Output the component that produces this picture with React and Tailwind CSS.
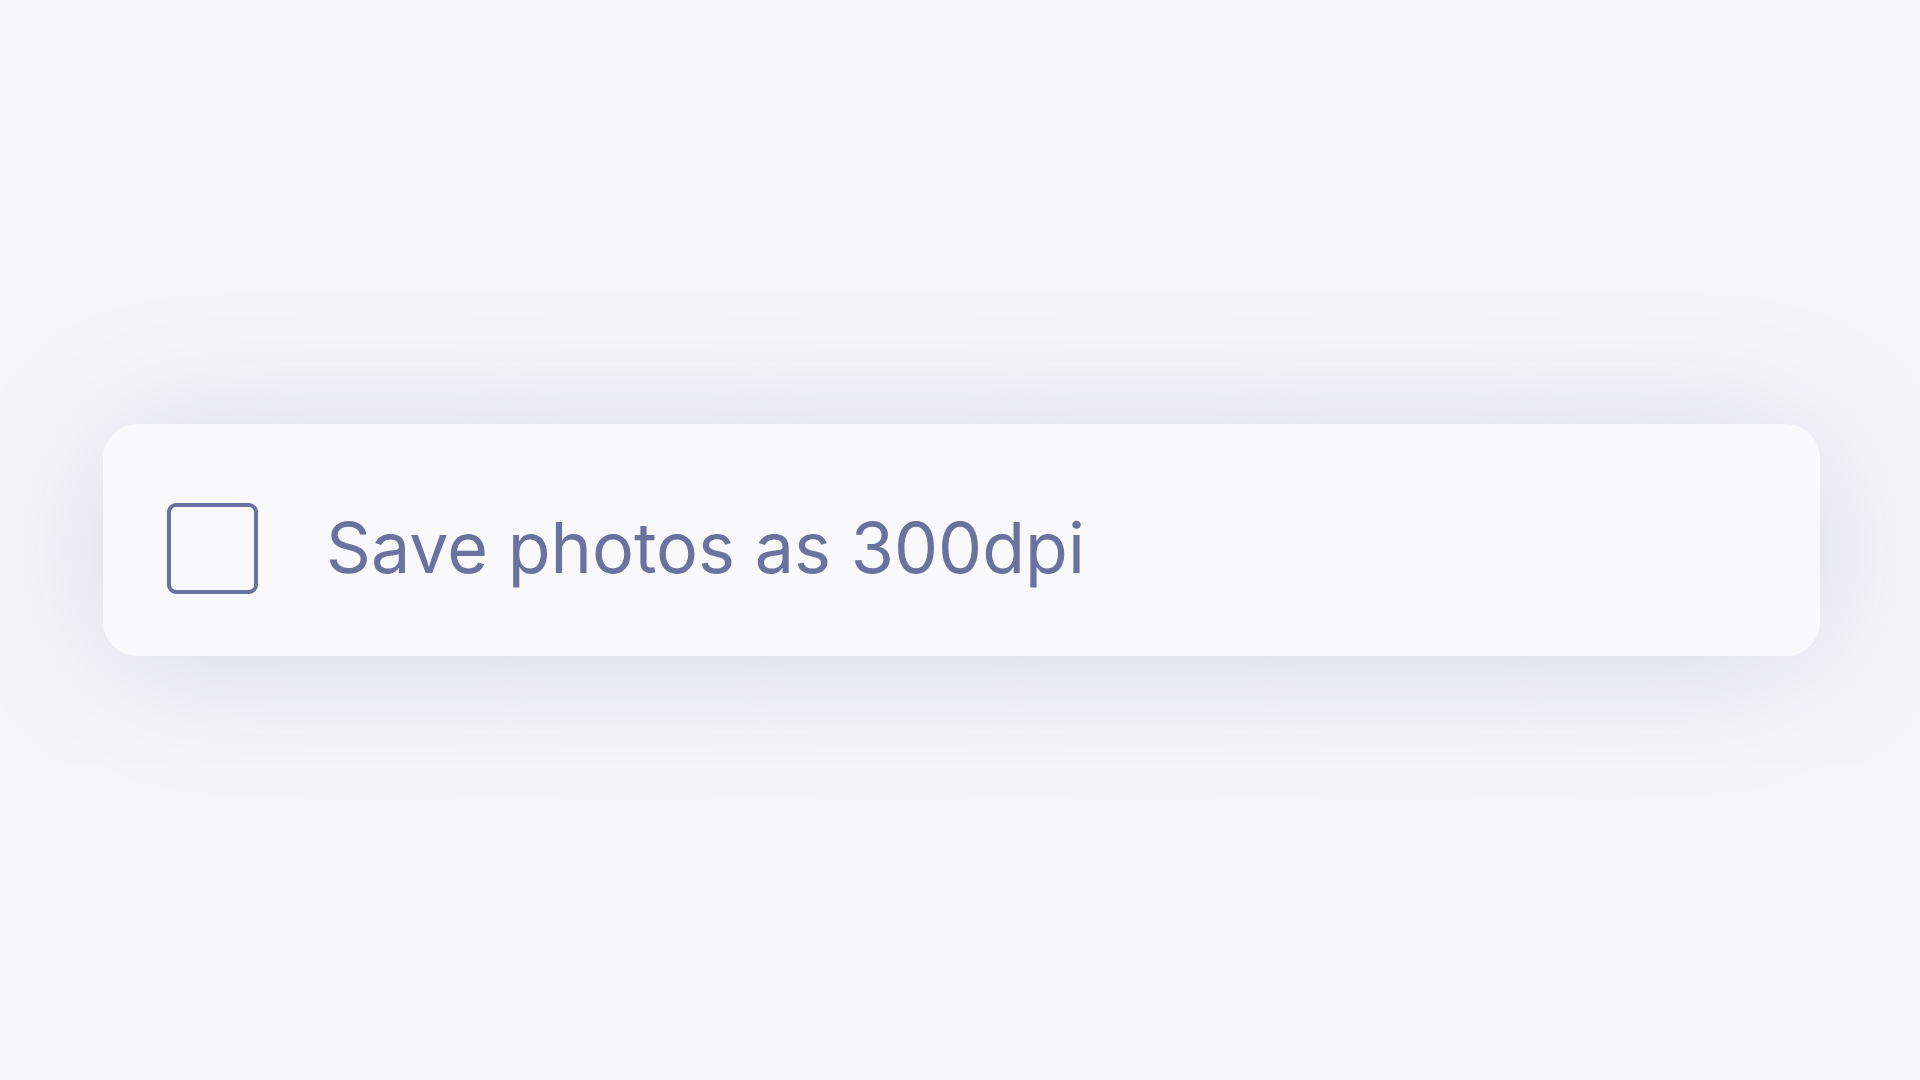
export default function App() {
  return (
    <div className="min-h-screen w-full bg-[#f6f6fa] flex items-center justify-center" style={{ fontFamily: 'Inter, "Noto Sans", sans-serif' }}>
      <label className="w-[1717px] h-[232px] ml-[3px] bg-[#f9f9fc] rounded-[34px] shadow-[0_8px_150px_rgba(40,40,90,0.15)] flex items-center pl-[64px] pt-[16px] gap-[68px] cursor-pointer">
        <span className="w-[91px] h-[91px] shrink-0 rounded-[9px] border-[4px] border-[#6a73a0] bg-[#f9f9fc]" />
        <span className="text-[70px] leading-none text-[#6a73a0]">Save photos as 300dpi</span>
      </label>
    </div>
  )
}
